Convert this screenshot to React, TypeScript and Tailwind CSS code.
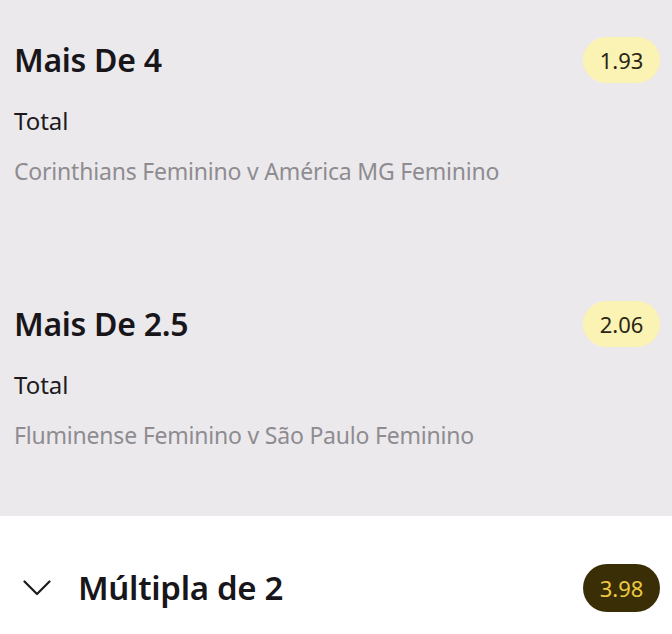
const bets = [
  { id: 1, title: "Mais De 4", market: "Total", match: "Corinthians Feminino v América MG Feminino", odds: "1.93" },
  { id: 2, title: "Mais De 2.5", market: "Total", match: "Fluminense Feminino v São Paulo Feminino", odds: "2.06" },
];

const App = () => {
  return (
    <div className="w-[672px] h-[634px] overflow-hidden bg-white font-['Noto_Sans',sans-serif]">
      <section className="bg-[#ebe9ec] h-[516px] overflow-hidden flex flex-col">
        {bets.map(({ id, title, market, match, odds }) => (
          <div key={id} className="shrink-0 h-[264px] pl-[14px] pr-[12px] pt-[37px]">
            <div className="flex items-center justify-between">
              <h2 className="text-[32px] font-semibold text-[#18161a] leading-[46px] tracking-[-0.3px]">{title}</h2>
              <span className="h-[46px] w-[77px] rounded-full bg-[#fbf3b3] flex items-center justify-center text-[22px] text-[#2b2516]">
                {odds}
              </span>
            </div>
            <p className="mt-[22px] text-[24px] text-[#1c1a1e] leading-[32px]">{market}</p>
            <p className="mt-[18px] text-[23px] text-[#8e8c90] leading-[32px] tracking-[-0.2px]">{match}</p>
          </div>
        ))}
      </section>
      <section className="bg-white h-[118px] flex items-center justify-between pl-[23px] pr-[12px] pt-[26px]">
        <div className="flex items-center gap-[27px]">
          <svg width="28" height="16" viewBox="0 0 28 16" fill="none" className="text-[#1c1a1e]">
            <polyline points="1.5,1.5 14,14 26.5,1.5" stroke="currentColor" strokeWidth="2.2" strokeLinecap="round" strokeLinejoin="round" />
          </svg>
          <h2 className="text-[33px] font-semibold text-[#18161a] tracking-[-0.3px]">Múltipla de 2</h2>
        </div>
        <span className="h-[48px] w-[77px] rounded-full bg-[#3a2e06] flex items-center justify-center text-[22px] text-[#ecc940]">
          3.98
        </span>
      </section>
    </div>
  );
};

export default App;
